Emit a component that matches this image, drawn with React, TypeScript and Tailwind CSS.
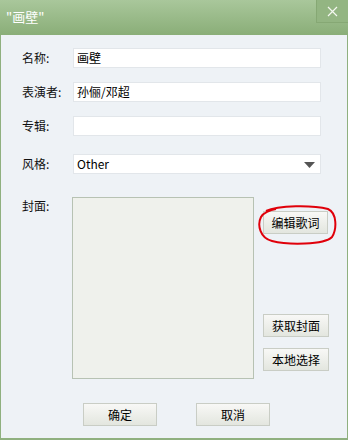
import React from "react";

const font = { fontFamily: '"Noto Sans CJK SC", "Liberation Sans", sans-serif' };

function Btn({ children, w }: { children: React.ReactNode; w: string }) {
  return (
    <div
      className={`${w} h-[23px] flex items-center justify-center border border-[#c9cdc5] bg-gradient-to-b from-[#f8f8f6] to-[#e3e6df] text-[12px] text-black`}
    >
      {children}
    </div>
  );
}

function Row({ label, value, mt, select }: { label: string; value?: string; mt: string; select?: boolean }) {
  return (
    <div className={`flex items-center ${mt}`}>
      <div className="w-[51px] text-[12px] text-[#111]">{label}</div>
      <div className="w-[248px] h-[20px] bg-white border border-[#e2e6ea] flex items-center pl-[3px] text-[12px] text-black relative">
        {value}
        {select && (
          <svg className="absolute right-[5px] top-[7px]" width="11" height="6" viewBox="0 0 11 6">
            <path d="M0 0 L11 0 L5.5 6 Z" fill="#555" />
          </svg>
        )}
      </div>
    </div>
  );
}

export default function App() {
  return (
    <div className="w-[348px] h-[440px] flex flex-col overflow-hidden" style={font}>
      <div className="h-[35px] bg-gradient-to-b from-[#a9c79b] to-[#8aae78] flex justify-between relative">
        <div className="pl-[6px] pt-[9px] text-[13px] text-white leading-[16px]">"画壁"</div>
        <div className="w-[32px] h-[23px] border-l border-b border-[#86a874] bg-[#93b582] flex items-center justify-center">
          <svg width="11" height="11" viewBox="0 0 11 11">
            <path d="M1 1 L10 10 M10 1 L1 10" stroke="#f4f8f0" strokeWidth="1.2" />
          </svg>
        </div>
      </div>
      <div className="flex-1 bg-[#eef2f6] border-x border-b-2 border-[#8fb07f] pl-[21px] relative">
        <Row label="名称:" value="画壁" mt="mt-[13px]" />
        <Row label="表演者:" value="孙俪/邓超" mt="mt-[14px]" />
        <Row label="专辑:" value="" mt="mt-[14px]" />
        <Row label="风格:" value="Other" mt="mt-[18px]" select />
        <div className="flex mt-[23px]">
          <div className="w-[50px] text-[12px] text-[#111] leading-[16px] mt-[1px]">封面:</div>
          <div className="w-[182px] h-[182px] bg-[#eff1ec] border border-[#b7c2b3]"></div>
          <div className="ml-[9px] flex flex-col">
            <div className="mt-[14px] relative">
              <Btn w="w-[65px]">编辑歌词</Btn>
              <svg className="absolute left-[-5px] top-[-6px]" width="80" height="40" viewBox="0 0 80 40">
                <path
                  d="M8 6 C20 0 55 0 70 4 C79 8 79 24 74 32 C66 40 30 40 14 36 C2 33 -1 20 3 12 C5 8 12 5 18 4"
                  fill="none"
                  stroke="#e0000a"
                  strokeWidth="2"
                />
              </svg>
            </div>
            <div className="mt-[80px]">
              <Btn w="w-[66px]">获取封面</Btn>
            </div>
            <div className="mt-[11px]">
              <Btn w="w-[66px]">本地选择</Btn>
            </div>
          </div>
        </div>
        <div className="flex mt-[24px] pl-[61px] gap-[39px]">
          <Btn w="w-[74px]">确定</Btn>
          <Btn w="w-[74px]">取消</Btn>
        </div>
      </div>
    </div>
  );
}
